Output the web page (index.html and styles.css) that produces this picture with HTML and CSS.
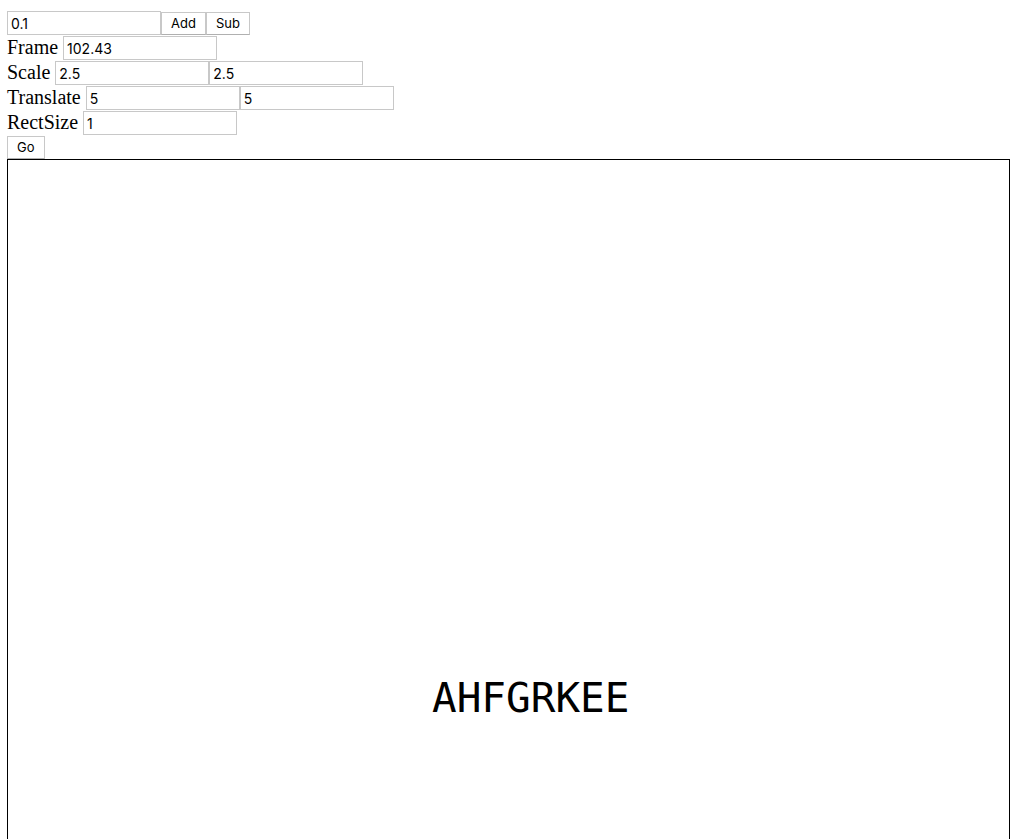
FILE: index.html
```html
<!DOCTYPE html>
<html lang="en">
<head>
<meta charset="utf-8">
<title>Frame viewer</title>
<link rel="stylesheet" href="styles.css">
</head>
<body>
<form class="controls">
  <div class="row">
    <input class="field" type="text" value="0.1" aria-label="Step">
    <button class="button" type="button">Add</button>
    <button class="button" type="button">Sub</button>
  </div>
  <div class="row">
    <label class="label" for="frame">Frame</label>
    <input class="field" id="frame" type="text" value="102.43">
  </div>
  <div class="row">
    <label class="label" for="scale-x">Scale</label>
    <input class="field" id="scale-x" type="text" value="2.5">
    <input class="field" type="text" value="2.5" aria-label="Scale Y">
  </div>
  <div class="row">
    <label class="label" for="translate-x">Translate</label>
    <input class="field" id="translate-x" type="text" value="5">
    <input class="field" type="text" value="5" aria-label="Translate Y">
  </div>
  <div class="row">
    <label class="label" for="rect-size">RectSize</label>
    <input class="field" id="rect-size" type="text" value="1">
  </div>
  <div class="row">
    <button class="button" type="button">Go</button>
  </div>
</form>
<main class="stage">
  <span class="stage-text">AHFGRKEE</span>
</main>
</body>
</html>
```
FILE: styles.css
```css
* {
  box-sizing: border-box;
}

body {
  display: flex;
  flex-direction: column;
  height: 100vh;
  margin: 0;
  padding: 11px 9px 0 7px;
  overflow: hidden;
  background: #fff;
  color: #000;
  font-family: "Liberation Serif", serif;
  font-size: 20px;
}

.controls {
  display: flex;
  flex-direction: column;
  gap: 1px;
}

.row {
  display: flex;
  align-items: flex-end;
}

.label {
  margin-right: 5px;
  padding-bottom: 2px;
  line-height: 22px;
}

.field,
.button {
  margin: 0;
  border: 1px solid #c8c8c8;
  border-radius: 0;
  background: #fff;
  color: #000;
  font-family: Inter, sans-serif;
}

.field {
  width: 154px;
  height: 24px;
  padding: 0 3px;
  font-size: 14px;
}

.button {
  height: 23px;
  padding: 0 9px 2px;
  border-bottom-color: #b0b0b0;
  font-size: 13px;
}

.stage {
  position: relative;
  flex: 1;
  border: 1px solid #000;
  border-bottom: 0;
}

.stage-text {
  position: absolute;
  top: 514px;
  left: 424px;
  font-family: "DejaVu Sans Mono", monospace;
  font-size: 41px;
  line-height: 48px;
}
```
